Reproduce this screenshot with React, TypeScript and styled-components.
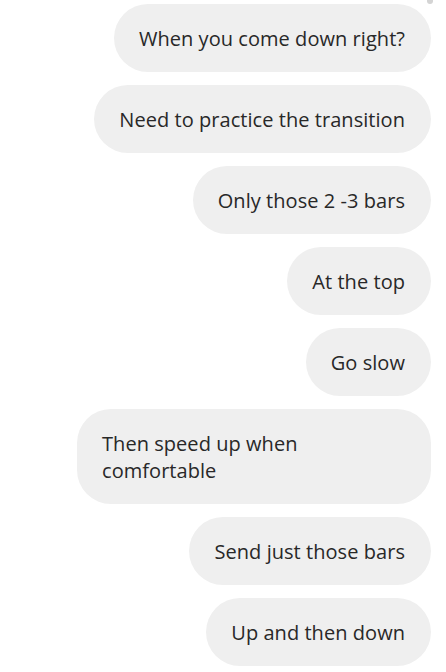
import React from "react";
import styled, { createGlobalStyle } from "styled-components";

const Global = createGlobalStyle`
  html, body { margin: 0; padding: 0; background: #ffffff; }
  body { font-family: "Open Sans", "Noto Sans", sans-serif; }
`;

const Thread = styled.div`
  position: relative;
  display: flex;
  flex-direction: column;
  align-items: flex-end;
  gap: 13px;
  padding: 4px 15px 0 0;
  width: 446px;
  box-sizing: border-box;
`;

const Bubble = styled.div`
  box-sizing: border-box;
  max-width: 354px;
  padding: 21px 26px 20px 25px;
  border-radius: 34px;
  background: #efefef;
  color: #282828;
  font-size: 20px;
  line-height: 27px;
  letter-spacing: 0.05px;
`;

const ScrollThumb = styled.div`
  position: absolute;
  top: -4px;
  right: 13px;
  width: 6px;
  height: 8px;
  border-radius: 3px;
  background: #d4d4d4;
`;

const messages = [
  "When you come down right?",
  "Need to practice the transition",
  "Only those 2 -3 bars",
  "At the top",
  "Go slow",
  "Then speed up when comfortable",
  "Send just those bars",
  "Up and then down",
];

export default function App() {
  return (
    <>
      <Global />
      <Thread>
        <ScrollThumb />
        {messages.map((m) => (
          <Bubble key={m}>{m}</Bubble>
        ))}
      </Thread>
    </>
  );
}
